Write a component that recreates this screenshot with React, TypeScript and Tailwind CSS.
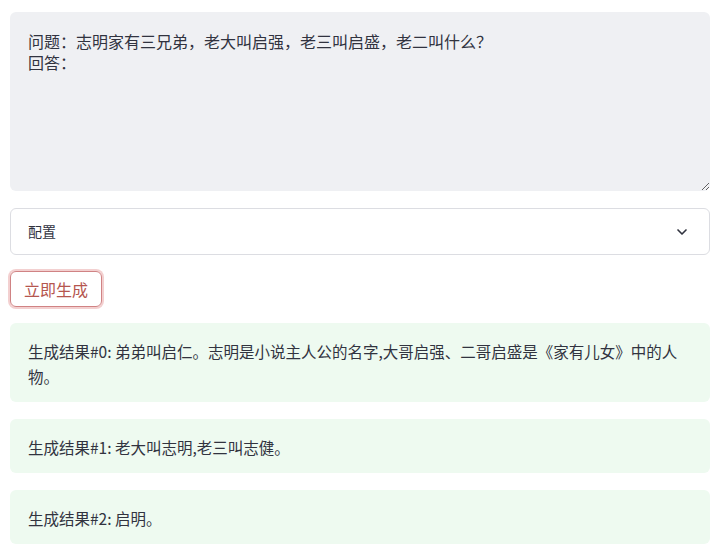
import { ChevronDown } from 'lucide-react';

const font = { fontFamily: '"Noto Sans CJK SC", "Noto Sans", sans-serif' } as React.CSSProperties;

const results = [
  '弟弟叫启仁。志明是小说主人公的名字,大哥启强、二哥启盛是《家有儿女》中的人物。',
  '老大叫志明,老三叫志健。',
  '启明。',
];

export default function App() {
  return (
    <div className="h-[552px] w-[720px] overflow-hidden bg-white text-[#262730]" style={font}>
      <div className="flex flex-col px-[10px] pt-3">
        <textarea
          className="h-[179px] w-full rounded-md bg-[#eff0f3] px-[18px] pt-[19px] text-[16px] leading-[21px] text-[#31333f] outline-none"
          style={font}
          defaultValue={'问题：志明家有三兄弟，老大叫启强，老三叫启盛，老二叫什么？\n回答：'}
        />

        <div className="mt-[17px] flex h-[47px] items-center justify-between rounded-md border border-[#dcdde2] px-[17px]">
          <span className="text-[14px] text-[#31333f]">配置</span>
          <ChevronDown className="mr-[2px] h-4 w-4 text-[#31333f]" strokeWidth={2.5} />
        </div>

        <div className="mt-4">
          <button
            className="flex h-[36px] items-center rounded-md border border-[#d08384] px-[13px] text-[16px] text-[#b5564f] ring-2 ring-[#f3d0d0]"
            style={font}
          >
            立即生成
          </button>
        </div>

        <div className="mt-[16px] flex flex-col gap-[17px]">
          {results.map((text, i) => (
            <div
              key={i}
              className="rounded-md bg-[#eefaf0] px-[18px] pb-[13px] pt-[16px] text-[15.5px] leading-[25px] text-[#31333f]"
            >
              {`生成结果#${i}: ${text}`}
            </div>
          ))}
        </div>
      </div>
    </div>
  );
}
